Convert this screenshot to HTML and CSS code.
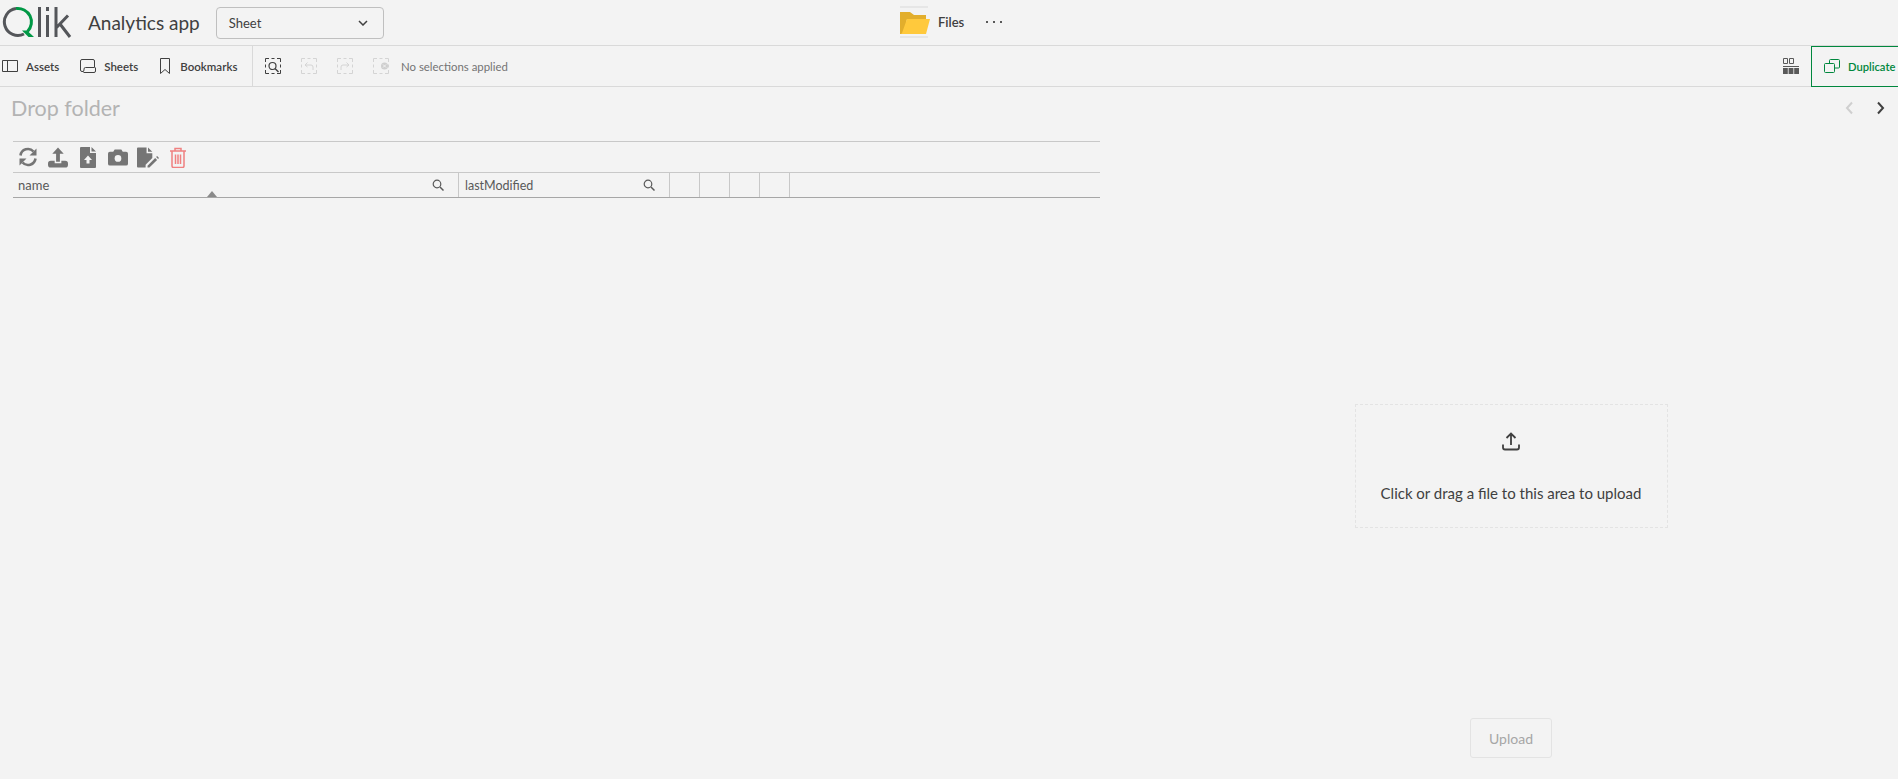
FILE: index.html
```html
<!DOCTYPE html>
<html lang="en">
<head>
  <meta charset="UTF-8">
  <title>Analytics app - Files</title>
  <link rel="stylesheet" href="styles.css">
</head>
<body>
  <!-- top bar -->
  <header class="topbar">
    <div class="topbar-left">
      <svg class="logo" width="70" height="38" viewBox="0 0 70 38">
        <path d="M14 4.600A13.500 13.500 0 1 0 22 30" fill="none" stroke="#54565a" stroke-width="3"/>
        <path d="M14 4.600A13.500 13.500 0 0 1 25.500 27.500" fill="none" stroke="#009845" stroke-width="3"/>
        <path d="M20 26.500h5l7 6.500h-5.500z" fill="#009845"/>
        <path d="M37.500 3v30M45.500 3v4M45.500 11v22M54 3v30M54.500 23.500L66 11.500M58 20l10 13" fill="none" stroke="#54565a" stroke-width="3"/>
      </svg>
      <span class="app-name">Analytics app</span>
      <div class="sheet-select">
        <span>Sheet</span>
        <svg width="10" height="6" viewBox="0 0 10 6"><path d="M1 1l4 4 4-4" fill="none" stroke="#404040" stroke-width="1.500"/></svg>
      </div>
    </div>
    <div class="topbar-center">
      <svg class="folder" width="32" height="32" viewBox="0 0 32 32">
        <rect x="1" y="0" width="28" height="2" fill="#e6e6e6"/>
        <rect x="1" y="30" width="28" height="2" fill="#e6e6e6"/>
        <path d="M1 6h10l4 3h12v4H8l-3 15H1z" fill="#e2ae2c"/>
        <path d="M8 13h23l-4 15H2l1-1z" fill="#ffc93c"/>
      </svg>
      <span class="files-label">Files</span>
      <span class="more"><i></i><i></i><i></i></span>
    </div>
  </header>

  <!-- toolbar -->
  <nav class="toolbar">
    <div class="tool-tabs">
      <div class="tool-tab">
        <svg width="16" height="14" viewBox="0 0 16 14"><path d="M.5 1.500h15v11H.5zM5.500 1.500v11" fill="none" stroke="#404040"/></svg>
        <span>Assets</span>
      </div>
      <div class="tool-tab">
        <svg width="16" height="14" viewBox="0 0 16 14"><path d="M3.500 12.500H2A1.500 1.500 0 0 1 .5 11V2A1.500 1.500 0 0 1 2 .5h11A1.500 1.500 0 0 1 14.500 2v6.500H5.500A1.500 1.500 0 0 0 4 10v1A1.500 1.500 0 0 1 2.500 12.500M3.500 13.500h10.500A1.500 1.500 0 0 0 15.500 12V8.500" fill="none" stroke="#404040"/></svg>
        <span>Sheets</span>
      </div>
      <div class="tool-tab tab-bookmarks">
        <svg width="10" height="16" viewBox="0 0 10 16"><path d="M.5.500h9v15L5 11.500.5 15.500z" fill="none" stroke="#404040"/></svg>
        <span>Bookmarks</span>
      </div>
    </div>
    <div class="selections">
      <svg width="16" height="16" viewBox="0 0 16 16">
        <path d="M.5 4V.5H4M6.500.5h3M12 .5h3.500V4M15.500 6.500v3M15.500 12v3.500H12M9.500 15.500h-3M4 15.500H.5V12M.5 9.500v-3" fill="none" stroke="#404040"/>
        <circle cx="7.500" cy="8" r="3.500" fill="none" stroke="#404040" stroke-width="1.200"/>
        <path d="M10 10.500l3.500 3.500" stroke="#404040" stroke-width="1.400"/>
      </svg>
      <svg width="16" height="16" viewBox="0 0 16 16">
        <path d="M.5 4V.5H4M6.500.5h3M12 .5h3.500V4M15.500 6.500v3M15.500 12v3.500H12M9.500 15.500h-3M4 15.500H.5V12M.5 9.500v-3" fill="none" stroke="#d4d4d4"/>
        <path d="M4 7l2.500-2.500M4 7l2.500 2M4 7h6a2 2 0 0 1 2 2v3" fill="none" stroke="#d4d4d4"/>
      </svg>
      <svg width="16" height="16" viewBox="0 0 16 16">
        <path d="M.5 4V.5H4M6.500.5h3M12 .5h3.500V4M15.500 6.500v3M15.500 12v3.500H12M9.500 15.500h-3M4 15.500H.5V12M.5 9.500v-3" fill="none" stroke="#d4d4d4"/>
        <path d="M12 7L9.500 4.500M12 7L9.500 9M12 7H6a2 2 0 0 0-2 2v3" fill="none" stroke="#d4d4d4"/>
      </svg>
      <svg width="16" height="16" viewBox="0 0 16 16">
        <path d="M.5 4V.5H4M6.500.5h3M12 .5h3.500V4M15.500 6.500v3M15.500 12v3.500H12M9.500 15.500h-3M4 15.500H.5V12M.5 9.500v-3" fill="none" stroke="#d4d4d4"/>
        <circle cx="11.500" cy="8" r="3.500" fill="#cfcfcf"/>
        <path d="M10 6.500l3 3M13 6.500l-3 3" stroke="#f3f3f3"/>
      </svg>
      <span class="no-selections">No selections applied</span>
    </div>
    <div class="tool-right">
      <svg class="grid-icon" width="16" height="16" viewBox="0 0 16 16">
        <path d="M.5.500h4v5h-4zM6.500.500h4v5h-4z" fill="none" stroke="#595959"/>
        <path d="M0 8h16v1H0z" fill="#595959"/>
        <path d="M0 10h4.800v6H0zM5.600 10h4.800v6H5.600zM11.200 10H16v6h-4.800z" fill="#595959"/>
      </svg>
      <div class="duplicate">
        <svg width="16" height="14" viewBox="0 0 16 14"><path d="M5.500 4V1.500A1 1 0 0 1 6.500.500h8a1 1 0 0 1 1 1V8a1 1 0 0 1-1 1H10.500" fill="none" stroke="#00873d"/><rect x=".5" y="4.500" width="10" height="9" rx="1" fill="none" stroke="#00873d"/></svg>
        <span>Duplicate</span>
      </div>
    </div>
  </nav>

  <div class="title-row">
    <h1>Drop folder</h1>
    <div class="sheet-nav">
      <svg width="10" height="14" viewBox="0 0 10 14"><path d="M8 1.500L3 7l5 5.500" fill="none" stroke="#cfcfcf" stroke-width="2"/></svg>
      <svg width="10" height="14" viewBox="0 0 10 14"><path d="M2 1.500L7 7l-5 5.500" fill="none" stroke="#404040" stroke-width="2"/></svg>
    </div>
  </div>

  <main class="content">
    <section class="table-panel">
      <div class="table-actions">
        <!-- refresh -->
        <svg width="20" height="20" viewBox="0 0 20 20">
          <path d="M2.500 8.500A7.500 7.500 0 0 1 15.500 4.500" fill="none" stroke="#757575" stroke-width="2.600"/>
          <path d="M18.500 1.500v7h-7z" fill="#757575"/>
          <path d="M17.500 11.500A7.500 7.500 0 0 1 4.500 15.500" fill="none" stroke="#757575" stroke-width="2.600"/>
          <path d="M1.500 18.500v-7h7z" fill="#757575"/>
        </svg>
        <!-- upload tray -->
        <svg width="20" height="21" viewBox="0 0 21 21">
          <path d="M10.500 0l6 6.500h-4V15h-4V6.500h-4z" fill="#757575"/>
          <path d="M0 17a3 3 0 0 1 3-3h4v2.500h7V14h4a3 3 0 0 1 3 3v1a3 3 0 0 1-3 3H3a3 3 0 0 1-3-3z" fill="#757575"/>
        </svg>
        <!-- file upload -->
        <svg width="20" height="21" viewBox="-2 0 20 21">
          <path d="M1 0h9v6h6v14a1 1 0 0 1-1 1H1a1 1 0 0 1-1-1V1a1 1 0 0 1 1-1zM11.500 0L16 4.500h-4.500z" fill="#757575"/>
          <path d="M8 8.500l4 4.500H9.500v3.500h-3V13H4z" fill="#f3f3f3"/>
        </svg>
        <!-- camera -->
        <svg width="20" height="17" viewBox="0 0 21 17">
          <path d="M2 2.500h3.500L7 0h7l1.500 2.500H19a2 2 0 0 1 2 2V15a2 2 0 0 1-2 2H2a2 2 0 0 1-2-2V4.500a2 2 0 0 1 2-2z" fill="#757575"/>
          <circle cx="10.500" cy="9.500" r="3.500" fill="#f3f3f3"/>
        </svg>
        <!-- file edit -->
        <svg class="icon-edit" width="22" height="21" viewBox="0 0 23 21">
          <path d="M1 0h9v6h6v5l-7 7v3H1a1 1 0 0 1-1-1V1a1 1 0 0 1 1-1zM11.500 0L16 4.500h-4.500z" fill="#757575"/>
          <path d="M11 19v2h2l8-8-2-2zM20 10l2 2 1-1-2-2z" fill="#757575"/>
        </svg>
        <!-- trash -->
        <svg width="18" height="21" viewBox="0 0 18 21">
          <path d="M1 4h16M6 3.500V1.500h6v2M3 4.500V19a1.500 1.500 0 0 0 1.500 1.500h9A1.500 1.500 0 0 0 15 19V4.500M6.500 7.500V17M9 7.500V17M11.500 7.500V17" fill="none" stroke="#f08080" stroke-width="1.500"/>
        </svg>
      </div>
      <div class="table-head">
        <div class="col col-name">
          <span>name</span>
          <svg width="12" height="12" viewBox="0 0 12 12"><circle cx="5" cy="5" r="3.800" fill="none" stroke="#595959" stroke-width="1.200"/><path d="M8 8l3.500 3.500" stroke="#595959" stroke-width="1.500"/></svg>
          <i class="sort-arrow"></i>
        </div>
        <div class="col col-modified">
          <span>lastModified</span>
          <svg width="12" height="12" viewBox="0 0 12 12"><circle cx="5" cy="5" r="3.800" fill="none" stroke="#595959" stroke-width="1.200"/><path d="M8 8l3.500 3.500" stroke="#595959" stroke-width="1.500"/></svg>
        </div>
        <div class="col col-small"></div>
        <div class="col col-small"></div>
        <div class="col col-small"></div>
        <div class="col col-small"></div>
      </div>
    </section>

    <section class="upload-panel">
      <div class="dropzone">
        <svg width="18" height="19" viewBox="0 0 18 19"><path d="M9 13V1.500M4.500 6L9 1.500 13.500 6M1 12.500v3A2 2 0 0 0 3 17.500h12a2 2 0 0 0 2-2v-3" fill="none" stroke="#404040" stroke-width="1.800"/></svg>
        <p>Click or drag a file to this area to upload</p>
      </div>
      <button class="upload-btn">Upload</button>
    </section>
  </main>
</body>
</html>
```
FILE: styles.css
```css
* {
  box-sizing: border-box;
}
html, body {
  height: 100%;
}
body {
  margin: 0;
  background: #f3f3f3;
  font-family: "Lato", "Noto Sans", sans-serif;
  color: #404040;
  display: flex;
  flex-direction: column;
  overflow: hidden;
}
svg {
  display: block;
  flex: none;
}

.topbar {
  height: 46px;
  border-bottom: 1px solid #d9d9d9;
  position: relative;
  display: flex;
  align-items: center;
  flex: none;
}
.topbar-left {
  display: flex;
  align-items: center;
  padding-left: 2px;
}
.app-name {
  font-size: 19px;
  margin-left: 16px;
  color: #404040;
}
.sheet-select {
  width: 168px;
  height: 32px;
  margin-left: 16px;
  padding: 0 15px 0 12px;
  border: 1px solid #bfbfbf;
  border-radius: 4px;
  display: flex;
  align-items: center;
  justify-content: space-between;
  font-size: 13px;
}
.topbar-center {
  position: absolute;
  left: 899px;
  top: 6px;
  display: flex;
  align-items: center;
}
.files-label {
  font-size: 13px;
  font-weight: 600;
  margin-left: 7px;
}
.more {
  display: flex;
  gap: 5px;
  margin-left: 22px;
}
.more i {
  width: 2px;
  height: 2px;
  background: #595959;
}

.toolbar {
  height: 41px;
  border-bottom: 1px solid #d9d9d9;
  display: flex;
  align-items: stretch;
  flex: none;
}
.tool-tabs {
  display: flex;
  align-items: center;
  gap: 21px;
  padding: 0 12px 0 2px;
  border-right: 1px solid #d9d9d9;
  width: 253px;
}
.tool-tab {
  display: flex;
  align-items: center;
  gap: 8px;
  font-size: 11.500px;
  font-weight: 600;
}
.tab-bookmarks {
  gap: 10px;
  margin-left: 1px;
}
.selections {
  display: flex;
  align-items: center;
  gap: 20px;
  padding-left: 12px;
}
.no-selections {
  font-size: 11.400px;
  color: #737373;
  margin-left: -8px;
}
.tool-right {
  margin-left: auto;
  display: flex;
  align-items: center;
}
.grid-icon {
  margin-right: 12px;
}
.duplicate {
  height: 41px;
  width: 87px;
  padding-left: 12px;
  border: 1px solid #00873d;
  border-right: 0;
  display: flex;
  align-items: center;
  gap: 8px;
  font-size: 11.200px;
  font-weight: 600;
  color: #00873d;
  white-space: nowrap;
}

.title-row {
  height: 36px;
  display: flex;
  align-items: center;
  justify-content: space-between;
  padding: 5px 12px 0 11px;
  flex: none;
}
h1 {
  margin: 0;
  font-size: 21.500px;
  font-weight: 400;
  color: #b3b3b3;
}
.sheet-nav {
  display: flex;
  gap: 22px;
}

.content {
  flex: 1;
  display: flex;
  min-height: 0;
}
.table-panel {
  width: 1124px;
  padding: 18px 24px 0 13px;
}
.table-actions {
  height: 32px;
  border-top: 1px solid #c8c8c8;
  border-bottom: 1px solid #c8c8c8;
  display: flex;
  align-items: center;
  gap: 10px;
  padding-left: 5px;
}
.icon-edit {
  margin-left: -1px;
}
.table-head {
  height: 25px;
  border-bottom: 1px solid #a6a6a6;
  display: flex;
}
.col {
  position: relative;
  height: 100%;
  border-right: 1px solid #c8c8c8;
  display: flex;
  align-items: center;
  justify-content: space-between;
  padding: 0 14px 0 5px;
  font-size: 13px;
  color: #595959;
}
.col-name {
  width: 446px;
}
.col-modified {
  width: 211px;
  font-size: 12.500px;
  padding-left: 6px;
}
.col-small {
  width: 30px;
}
.sort-arrow {
  position: absolute;
  left: 194px;
  bottom: 0;
  width: 0;
  height: 0;
  border-left: 5px solid transparent;
  border-right: 5px solid transparent;
  border-bottom: 6px solid #8a8a8a;
}

.upload-panel {
  flex: 1;
  display: flex;
  flex-direction: column;
  align-items: center;
  padding-top: 281px;
}
.dropzone {
  width: 313px;
  height: 124px;
  border: 1px dashed #e3e3e3;
  display: flex;
  flex-direction: column;
  align-items: center;
  padding-top: 27px;
}
.dropzone p {
  margin: 33px 0 0;
  font-size: 15px;
  color: #404040;
}
.upload-btn {
  width: 82px;
  height: 40px;
  margin-top: 190px;
  background: transparent;
  border: 1px solid #e3e3e3;
  border-radius: 3px;
  font-family: inherit;
  font-size: 14px;
  color: #a6a6a6;
}
```
